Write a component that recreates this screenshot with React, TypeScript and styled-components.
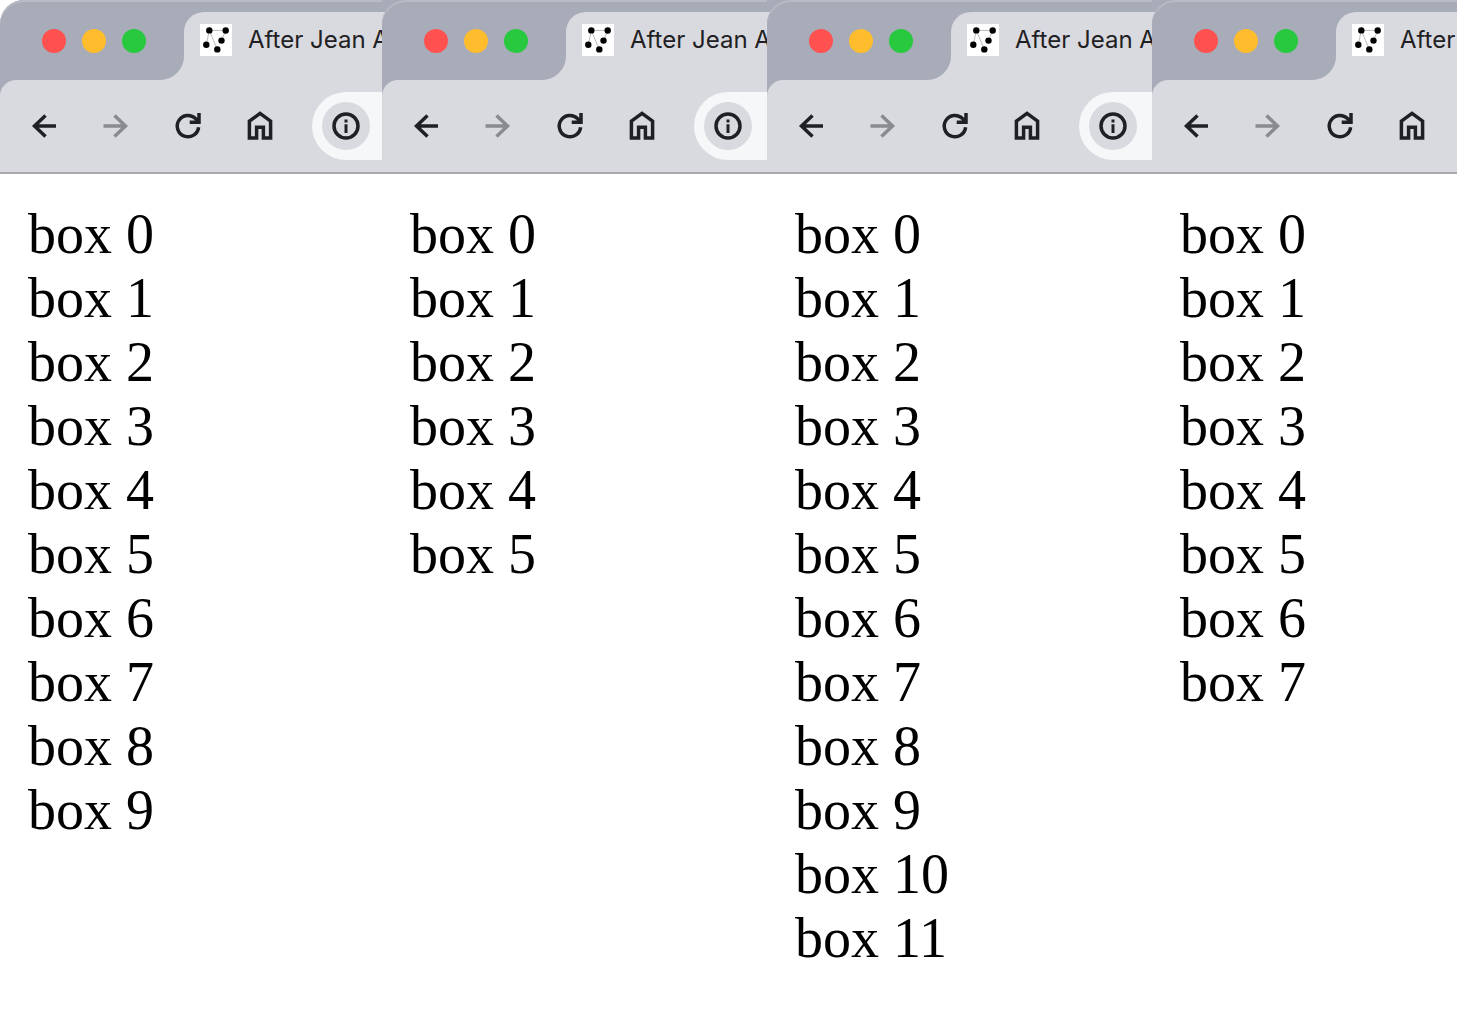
import React from "react";
import styled, { createGlobalStyle } from "styled-components";

const color = {
  strip: "#a8abb8",
  edge: "#b9bcc7",
  bar: "#d9dadf",
  field: "#f5f7f9",
  rule: "#a9a9ae",
  ink: "#1f2023",
  muted: "#8a8b8f",
};

const GlobalStyle = createGlobalStyle`
  * { box-sizing: border-box; }
  body { margin: 0; background: #fff; }
`;

const Desktop = styled.main`
  display: grid;
  grid-template-columns:
    minmax(0, 382fr) minmax(0, 385fr) minmax(0, 385fr) minmax(0, 305fr);
  min-height: 100vh;
`;

/* A window that overlaps its neighbour shows that neighbour's tab behind its corner. */
const Window = styled.section<{ $overlaps: boolean }>`
  min-width: 0;
  overflow: hidden;
  background: ${(p) =>
    p.$overlaps
      ? `linear-gradient(${color.strip} 12px, ${color.bar} 12px 40px, #fff 40px)`
      : "#fff"};
`;

const Chrome = styled.header`
  background: ${color.strip};
  border-top-left-radius: 24px;
  box-shadow: inset 0 2px 0 ${color.edge};
  overflow: hidden;
`;

const TitleBar = styled.div`
  display: flex;
  height: 80px;
`;

const ControlsCell = styled.div`
  flex: none;
  width: 184px;
  background: linear-gradient(transparent 40px, ${color.bar} 40px);
`;

const Controls = styled.div`
  display: flex;
  align-items: center;
  gap: 16px;
  height: 100%;
  padding: 2px 0 0 42px;
  background: ${color.strip};
  border-radius: 24px 0 24px 0;
  box-shadow: inset 0 2px 0 ${color.edge};
`;

const Light = styled.button<{ $fill: string }>`
  flex: none;
  width: 24px;
  height: 24px;
  padding: 0;
  border: 0;
  border-radius: 50%;
  background: ${(p) => p.$fill};
`;

const TabStrip = styled.div`
  flex: 1;
  min-width: 0;
  padding-top: 12px;
`;

const Tab = styled.div`
  display: flex;
  align-items: flex-start;
  gap: 16px;
  height: 100%;
  padding: 12px 0 0 16px;
  overflow: hidden;
  border-top-left-radius: 20px;
  background: ${color.bar};
`;

const Favicon = styled.svg`
  flex: none;
  width: 32px;
  height: 32px;
  background: #fff;
`;

const TabTitle = styled.span`
  font: 400 24px/32px Inter, "Liberation Sans", sans-serif;
  color: ${color.ink};
  white-space: nowrap;
`;

const Toolbar = styled.nav`
  display: flex;
  padding: 12px 0 12px 8px;
  border-bottom: 2px solid ${color.rule};
  border-top-left-radius: 16px;
  background: ${color.bar};
  overflow: hidden;
`;

const ToolButton = styled.button`
  display: grid;
  flex: none;
  place-items: center;
  width: 72px;
  height: 68px;
  padding: 0;
  border: 0;
  background: none;
  color: ${color.ink};

  &:disabled {
    color: ${color.muted};
  }
`;

const AddressBar = styled.div`
  flex: 1 0 320px;
  height: 68px;
  margin-left: 16px;
  padding: 10px;
  border-radius: 34px 0 0 34px;
  background: ${color.field};
`;

const InfoButton = styled(ToolButton)`
  width: 48px;
  height: 48px;
  border-radius: 50%;
  background: ${color.bar};
`;

const Icon = styled.svg`
  width: 36px;
  height: 36px;
  fill: none;
  stroke: currentColor;
  stroke-width: 3.5;
`;

const Boxes = styled.div`
  padding: 28px;
  background: #fff;
  font: 400 56px/64px "Liberation Serif", "Times New Roman", serif;
  color: #000;
`;

const Box = styled.div`
  white-space: nowrap;
`;

const lights = [
  { label: "Close", fill: "#ff5150" },
  { label: "Minimize", fill: "#ffbd2e" },
  { label: "Zoom", fill: "#28c93f" },
];

const tools = [
  { label: "Back", path: "M30 18H8.5M19.5 7.5L8.5 18L19.5 28.5" },
  { label: "Forward", path: "M5.5 18H27.5M16.5 7.5L27.5 18L16.5 28.5" },
  {
    label: "Reload",
    path: "M29 5V14.2H19.7M28.6 19.2A10.7 10.7 0 1 1 25.6 10.6L28.6 13.8",
  },
  {
    label: "Home",
    path: "M7.4 29.9V13.2L18 5.4L28.6 13.2V29.9H21.4V19.3H14.6V29.9Z",
  },
];

const points = [
  [9.3, 6.4],
  [25.7, 6.5],
  [21.5, 16.6],
  [6.3, 20.8],
  [17.3, 25.4],
];

function BrowserWindow({ count, overlaps }: { count: number; overlaps: boolean }) {
  return (
    <Window $overlaps={overlaps}>
      <Chrome>
        <TitleBar>
          <ControlsCell>
            <Controls>
              {lights.map((l) => (
                <Light key={l.label} aria-label={l.label} $fill={l.fill} />
              ))}
            </Controls>
          </ControlsCell>
          <TabStrip>
            <Tab>
              <Favicon viewBox="0 0 32 32" aria-hidden="true">
                <path
                  d="M21.5 16.6L25.7 6.5L9.3 6.4L6.3 20.8M9.3 6.4L17.3 25.4"
                  fill="none"
                  stroke="#aaa"
                  strokeWidth="0.8"
                />
                {points.map(([x, y]) => (
                  <circle key={x} cx={x} cy={y} r="3.2" />
                ))}
              </Favicon>
              <TabTitle>After Jean A</TabTitle>
            </Tab>
          </TabStrip>
        </TitleBar>
        <Toolbar>
          {tools.map((t) => (
            <ToolButton key={t.label} aria-label={t.label} disabled={t.label === "Forward"}>
              <Icon viewBox="0 0 36 36" strokeWidth="3.5">
                <path d={t.path} />
              </Icon>
            </ToolButton>
          ))}
          <AddressBar>
            <InfoButton aria-label="Site information">
              <Icon viewBox="0 0 36 36">
                <circle cx="18" cy="18" r="12" />
                <path d="M18 16.3V25M18 11.4V14.4" strokeWidth="3" />
              </Icon>
            </InfoButton>
          </AddressBar>
        </Toolbar>
      </Chrome>
      <Boxes>
        {Array.from({ length: count }, (_, i) => (
          <Box key={i}>box {i}</Box>
        ))}
      </Boxes>
    </Window>
  );
}

export default function App() {
  return (
    <>
      <GlobalStyle />
      <Desktop>
        {[10, 6, 12, 8].map((count, i) => (
          <BrowserWindow key={i} count={count} overlaps={i > 0} />
        ))}
      </Desktop>
    </>
  );
}
